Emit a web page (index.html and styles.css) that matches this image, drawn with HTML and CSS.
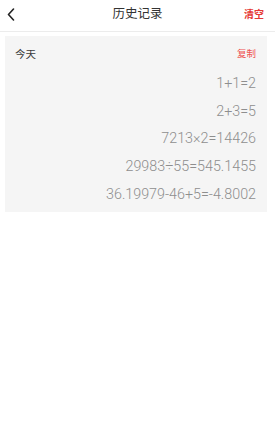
FILE: index.html
```html
<!DOCTYPE html>
<html lang="zh">
<head>
<meta charset="utf-8">
<link rel="stylesheet" href="styles.css">
</head>
<body>
<div class="page">
  <header class="topbar">
    <span class="back">
      <svg width="8" height="13" viewBox="0 0 8 13"><path d="M6.5 1 L1.5 6.5 L6.5 12" fill="none" stroke="#222" stroke-width="1.6" stroke-linecap="round" stroke-linejoin="round"/></svg>
    </span>
    <h1 class="title">历史记录</h1>
    <span class="clear">清空</span>
  </header>
  <section class="card">
    <div class="card-head">
      <span class="day">今天</span>
      <span class="copy">复制</span>
    </div>
    <ul class="list">
      <li>1+1=2</li>
      <li>2+3=5</li>
      <li>7213×2=14426</li>
      <li>29983÷55=545.1455</li>
      <li>36.19979-46+5=-4.8002</li>
    </ul>
  </section>
</div>
</body>
</html>
```
FILE: styles.css
```css
html, body {
  margin: 0;
  padding: 0;
  background: #ffffff;
  font-family: "Noto Sans CJK SC", Roboto, sans-serif;
}
.page {
  width: 275px;
  height: 432px;
  background: #fff;
}
.topbar {
  border-bottom: 1px solid #ececec;
  display: flex;
  align-items: center;
  justify-content: space-between;
  padding: 0 11px 0 7px;
  position: relative;
  box-sizing: border-box;
  height: 32px;
}
.back {
  display: flex;
  align-items: center;
  height: 13px;
  margin-top: -2px;
}
.title {
  position: absolute;
  left: 0;
  right: 0;
  text-align: center;
  margin: 0;
  font-size: 12.5px;
  font-weight: 400;
  color: #333;
  line-height: 1;
  top: 7px;
  pointer-events: none;
}
.clear {
  font-size: 10px;
  font-weight: 700;
  color: #e53935;
  line-height: 1;
  margin-top: -3px;
}
.card {
  margin: 4px 8px 0 5px;
  background: #f5f5f5;
  padding: 11px 11px 3px 10px;
}
.card-head {
  display: flex;
  justify-content: space-between;
  align-items: center;
  height: 14px;
}
.day {
  font-size: 10.5px;
  color: #3a3a3a;
  line-height: 1;
}
.copy {
  font-size: 9.5px;
  color: #ef5350;
  line-height: 1;
}
.list {
  list-style: none;
  margin: 9px 0 0 0;
  padding: 0;
  display: flex;
  flex-direction: column;
  align-items: flex-end;
}
.list li {
  font-family: Roboto, "Noto Sans", sans-serif;
  font-size: 14.3px;
  font-weight: 300;
  color: #8e8e8e;
  line-height: 27.7px;
}
```
